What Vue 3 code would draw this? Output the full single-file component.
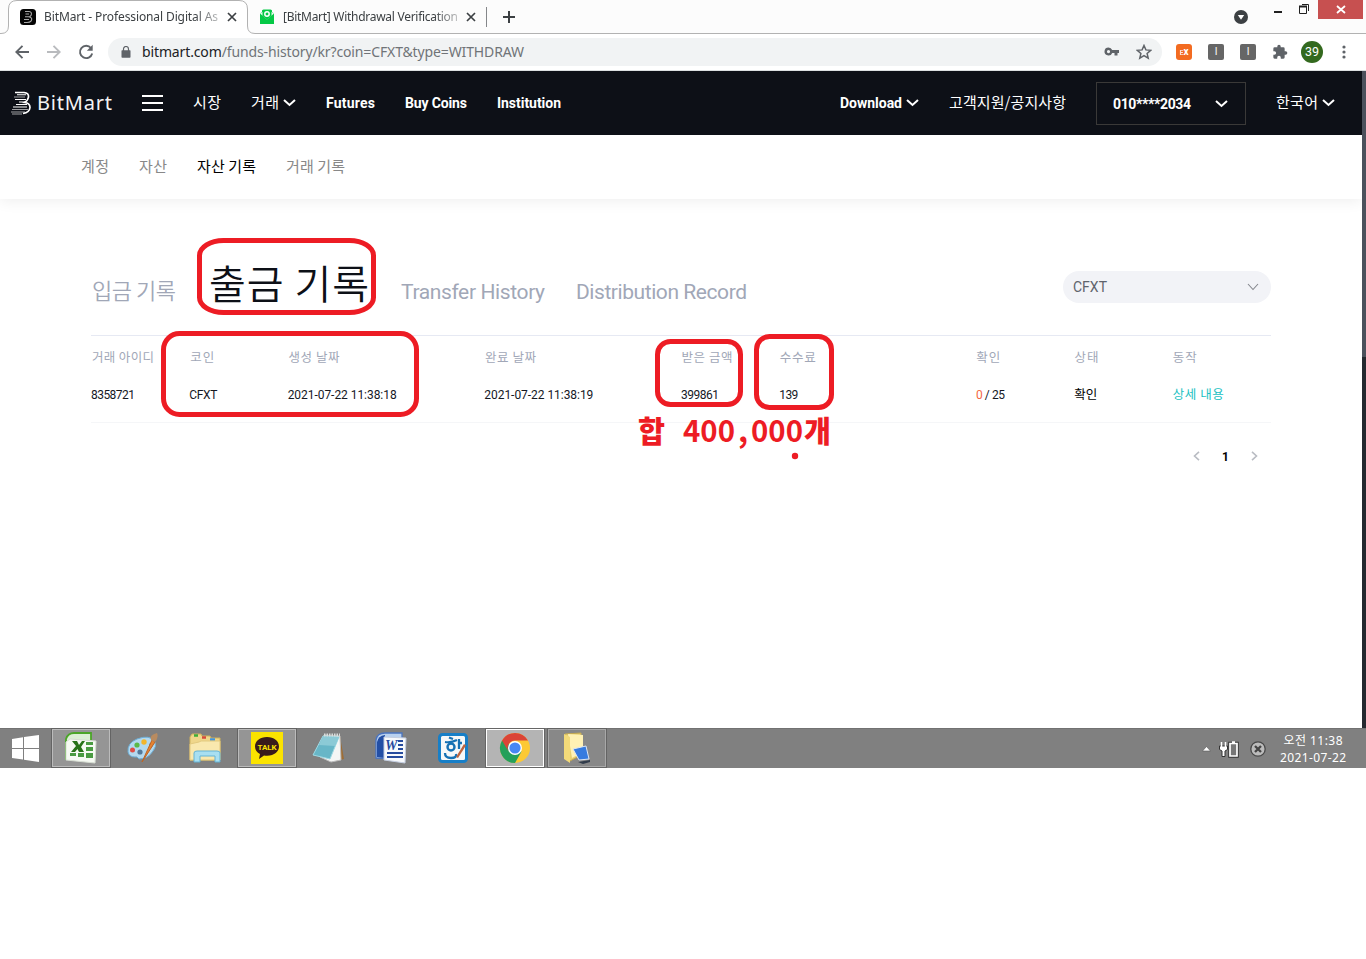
<script setup>
const columns = [
  { title: '거래 아이디', tw: 62, value: '8358721', vw: 44 },
  { title: '코인', tw: 24, value: 'CFXT', vw: 28 },
  { title: '생성 날짜', tw: 51, value: '2021-07-22 11:38:18', vw: 109 },
  { title: '완료 날짜', tw: 51, value: '2021-07-22 11:38:19', vw: 109 },
  { title: '받은 금액', tw: 51, value: '399861', vw: 38 },
  { title: '수수료', tw: 36, value: '139', vw: 19 },
  { title: '확인', tw: 24, value: '0 / 25', vw: 29, kind: 'count' },
  { title: '상태', tw: 24, value: '확인', vw: 23, kind: 'status' },
  { title: '동작', tw: 24, value: '상세 내용', vw: 51, kind: 'link' }
]

// Tracks a label out (or in) so that it fills the given width.
const vFit = {
  mounted(el, { value }) {
    const count = el.textContent.trim().length
    const natural = el.getBoundingClientRect().width
    if (count > 1) el.style.letterSpacing = `${(value - natural) / (count - 1)}px`
    el.style.width = `${value}px`
  }
}
</script>

<template>
  <div class="screen">
    <header class="tabs">
      <svg class="tab-outline" width="1366" height="34" viewBox="0 0 1366 34">
        <path d="M0 34V33.5H1Q8.500 33.500 8.500 26V9Q8.500 .5 17 .5H239Q247.500 .5 247.500 9V26Q247.500 33.500 255 33.500H1366V34Z" fill="#fff" />
        <path d="M0 33.500H1Q8.500 33.500 8.500 26V9Q8.500 .5 17 .5H239Q247.500 .5 247.500 9V26Q247.500 33.500 255 33.500H1366" fill="none" stroke="#b2b2b2" />
      </svg>
      <svg class="fav" width="16" height="16" viewBox="0 0 16 16">
        <rect width="16" height="16" rx="3.500" fill="#050505" />
        <path d="M5 2.500H9Q12.500 3 11 6.500L9.500 8Q13 9 11 12.200Q10 13.500 7 13.500H4M5.500 5H9M5 7.700H9.500M4 10.500H9" fill="none" stroke="#aaa" stroke-width="1.100" />
      </svg>
      <span class="tab-title first"><span v-fit="174">BitMart - Professional Digital As</span></span>
      <svg class="close" width="10" height="10" viewBox="0 0 10 10"><path d="M1 1L9 9M9 1L1 9" /></svg>
      <svg class="fav mail" width="16" height="16" viewBox="0 0 16 16">
        <path d="M1 4.500L3 3V2Q3 .5 4.500 .5H11.500Q13 .5 13 2V3L15 4.500V15H1Z" fill="#05c946" />
        <path d="M1 4.500L3.500 3H12.500L15 4.500L8 10.500Z" fill="#e9fbef" /><path d="M3.500 1H12.500V7L8 10.500L3.500 7Z" fill="#05c946" /><circle cx="8" cy="5" r="2.200" fill="none" stroke="#fff" stroke-width="1.500" />
      </svg>
      <span class="tab-title second"><span v-fit="175">[BitMart] Withdrawal Verification</span></span>
      <svg class="close" width="10" height="10" viewBox="0 0 10 10"><path d="M1 1L9 9M9 1L1 9" /></svg>
      <i class="divider"></i>
      <svg class="plus" width="12" height="12" viewBox="0 0 12 12"><path d="M6 0V12M0 6H12" stroke="#3c4043" stroke-width="2" /></svg>
      <div class="window-controls">
        <svg width="14" height="14" viewBox="0 0 14 14"><circle cx="7" cy="7" r="7" fill="#3c4043" /><path d="M3.800 5H10.200L7 9.800Z" fill="#fff" /></svg>
        <svg class="win" width="78" height="19" viewBox="0 0 78 19">
          <path d="M4 12H12" stroke="#202020" stroke-width="2" />
          <path d="M32 4.500H38.500V11M29.500 6.500H36.500V13.500H29.500Z" fill="none" stroke="#202020" />
          <path d="M29 6.500H37" stroke="#202020" stroke-width="2" />
        </svg>
        <b><svg width="45" height="19" viewBox="0 0 45 19"><path d="M19 6L27 13M27 6L19 13" stroke="#fff" stroke-width="1.800" /></svg></b>
      </div>
    </header>

    <div class="toolbar">
      <svg width="14" height="14" viewBox="0 0 14 14" class="ico back"><path d="M14 7H1.500M7.500 .8L1.300 7L7.500 13.200" /></svg>
      <svg width="14" height="14" viewBox="0 0 14 14" class="ico fwd"><path d="M0 7H12.500M6.500 .8L12.700 7L6.500 13.200" /></svg>
      <svg width="16" height="16" viewBox="0 0 16 16" class="ico reload"><path d="M13 4A6.200 6.200 0 1 0 14.200 9.500" /><path d="M14.700 .8V6.700H8.800Z" class="solid" /></svg>
      <div class="omnibox">
        <svg width="10" height="12" viewBox="0 0 10 12"><path d="M1 4.200H9Q9.500 4.200 9.500 5V11Q9.500 11.700 8.700 11.700H1.300Q.5 11.700 .5 11V5Q.5 4.200 1 4.200Z" fill="#5f6368" /><path d="M2.500 5V3A2.500 2.500 0 0 1 7.500 3V5" fill="none" stroke="#5f6368" stroke-width="1.200" /></svg>
        <span v-fit="382" class="url"><em>bitmart.com</em>/funds-history/kr?coin=CFXT&amp;type=WITHDRAW</span>
        <svg class="key" width="16" height="10" viewBox="0 0 16 10"><path d="M4.500 .5A4 4 0 1 0 8.200 6H10.500V8.500H13.500V6H15V3H8.200A4 4 0 0 0 4.500 .5ZM4.500 3A1.600 1.600 0 1 1 4.500 6.200A1.600 1.600 0 0 1 4.500 3Z" fill="#5f6368" fill-rule="evenodd" /></svg>
        <svg class="star" width="16" height="16" viewBox="0 0 16 16"><path d="M8 1.500L9.900 5.900L14.700 6.300L11.100 9.500L12.200 14.200L8 11.700L3.800 14.200L4.900 9.500L1.300 6.300L6.100 5.900Z" fill="none" stroke="#5f6368" stroke-width="1.500" /></svg>
      </div>
      <span class="ext orange"><small>E</small>x</span>
      <span class="ext grey">I</span>
      <span class="ext grey">I</span>
      <svg class="puzzle" width="16" height="16" viewBox="0 0 24 24"><path d="M20.500 11H19V7Q19 5 17 5H13V3.500A2.500 2.500 0 0 0 8 3.500V5H4Q2 5 2 7V10.800H3.500A2.700 2.700 0 0 1 3.500 16.200H2V20Q2 22 4 22H7.800V20.500A2.700 2.700 0 0 1 13.200 20.500V22H17Q19 22 19 20V16H20.500A2.500 2.500 0 0 0 20.500 11Z" fill="#5f6368" /></svg>
      <span class="avatar">39</span>
      <svg class="more" width="4" height="14" viewBox="0 0 4 14" fill="#5f6368"><circle cx="2" cy="2" r="1.600" /><circle cx="2" cy="7" r="1.600" /><circle cx="2" cy="12" r="1.600" /></svg>
    </div>

    <main class="page">
      <nav class="nav">
        <svg class="logo" width="21" height="24" viewBox="0 0 21 24" fill="none" stroke="#fff">
          <path d="M4 1.500H13Q18 2 17.500 6Q17 9.500 13.500 11.500Q19 12 19 16.500Q18.500 21.500 12 22.500" stroke-width="1.700" />
          <path d="M6 3.700H15M4 8.500H15M8 11H14M5 13.500H16M2 16H16" stroke-width="1.100" />
          <path d="M3 6H14M1 18.500H17M0 21H14M1 23H11" stroke-width="1.100" opacity=".6" />
        </svg>
        <span class="brand" v-fit="75">BitMart</span>
        <svg class="burger" width="21" height="16" viewBox="0 0 21 16"><path d="M0 1H21M0 8H21M0 15H21" stroke="#fff" stroke-width="2" /></svg>
        <span class="ko market" v-fit="28">시장</span>
        <span class="ko trade" v-fit="28">거래</span>
        <svg class="chev" width="13" height="8" viewBox="0 0 13 8"><path d="M1 1L6.500 6L12 1" /></svg>
        <span class="en futures" v-fit="49">Futures</span>
        <span class="en buy" v-fit="62">Buy Coins</span>
        <span class="en inst" v-fit="64">Institution</span>
        <span class="en download" v-fit="62">Download</span>
        <svg class="chev" width="13" height="8" viewBox="0 0 13 8"><path d="M1 1L6.500 6L12 1" /></svg>
        <span class="ko support" v-fit="117">고객지원/공지사항</span>
        <div class="account">
          <span class="en" v-fit="78">010****2034</span>
          <svg width="13" height="8" viewBox="0 0 13 8"><path d="M1 1L6.500 6L12 1" /></svg>
        </div>
        <span class="ko lang" v-fit="42">한국어</span>
        <svg class="chev" width="13" height="8" viewBox="0 0 13 8"><path d="M1 1L6.500 6L12 1" /></svg>
      </nav>

      <nav class="subnav">
        <span v-fit="28">계정</span>
        <span v-fit="28">자산</span>
        <span v-fit="59" class="on">자산 기록</span>
        <span v-fit="59">거래 기록</span>
      </nav>

      <section class="content">
        <div class="heads">
          <span class="deposit" v-fit="84">입금 기록</span>
          <span class="withdraw" v-fit="160">출금 기록</span>
          <span class="transfer" v-fit="144">Transfer History</span>
          <span class="dist" v-fit="171">Distribution Record</span>
          <div class="select">
            <span v-fit="34">CFXT</span>
            <svg width="12" height="8" viewBox="0 0 12 8"><path d="M1 1L6 6.500L11 1" fill="none" stroke="#85878d" stroke-width="1.100" /></svg>
          </div>
        </div>
        <div class="row titles">
          <div v-for="c in columns" :key="c.title"><span v-fit="c.tw">{{ c.title }}</span></div>
        </div>
        <div class="row values">
          <div v-for="c in columns" :key="c.title">
            <span v-if="c.kind === 'count'" v-fit="c.vw"><i>0</i> / 25</span>
            <span v-else v-fit="c.vw" :class="c.kind">{{ c.value }}</span>
          </div>
        </div>
        <div class="pager">
          <svg width="7" height="10" viewBox="0 0 7 10"><path d="M6 .8L1.500 5L6 9.200" /></svg>
          <b>1</b>
          <svg width="7" height="10" viewBox="0 0 7 10"><path d="M1 .8L5.500 5L1 9.200" /></svg>
        </div>
      </section>
      <aside class="scroll"><i></i></aside>
    </main>

    <footer class="taskbar">
      <svg class="start" width="27" height="27" viewBox="0 0 27 27" fill="#fff"><path d="M0 4L11 2.300V13H0ZM12 2.100L27 0V13H12ZM0 14H11V24.500L0 23ZM12 14H27V27L12 24.700Z" /></svg>
      <div class="app open">
        <svg width="34" height="32" viewBox="0 0 34 32">
          <path d="M2 28V7Q4 1 10 1H27V8" fill="#dcefd5" stroke="#4ba528" stroke-width="1.800" />
          <path d="M6 7L32 9L31 31L2 28V10Z" fill="#f6faf3" stroke="#d6ddd2" />
          <path d="M8 9H13L15 13L18 9H21L17 15L20 20H15L13.500 17L11 20H7L12 14Z" fill="#287318" />
          <path d="M22 10H29V13H22ZM22 15H29V19H22ZM6 21H12V24H6ZM14 21H20V25H14ZM22 21H29V26H22Z" fill="#4a9b42" />
        </svg>
      </div>
      <div class="app">
        <svg width="34" height="32" viewBox="0 0 34 32">
          <path d="M2 20Q1 11 11 7Q24 2 29 10Q31 14 27 19Q22 27 13 27Q11 24 9 25Q3 25 2 20Z" fill="#b3d9ef" stroke="#6dadd4" />
          <circle cx="14" cy="20" r="2.600" fill="#53799a" /><circle cx="6.500" cy="18" r="2.500" fill="#e04d46" /><circle cx="11" cy="13" r="2.600" fill="#5bb947" /><circle cx="18" cy="10" r="2.700" fill="#f2b52c" /><circle cx="25" cy="13" r="2" fill="#4289d4" />
          <path d="M16 30L26 8L29 10Z" fill="#e68331" stroke="#bd6425" /><path d="M25 8Q23 3 31 1Q33 5 29 10Z" fill="#b88b60" />
        </svg>
      </div>
      <div class="app">
        <svg width="34" height="32" viewBox="0 0 34 32">
          <path d="M2 28V5L4 2H13L14 4H22L23 6H32V28Z" fill="#efd68a" stroke="#ceb15c" />
          <path d="M6 3.500H10" stroke="#3dad39" stroke-width="2.500" /><path d="M14 5.500H18" stroke="#d54b3d" stroke-width="2.500" /><path d="M22 7.500H27" stroke="#4395dc" stroke-width="2.500" />
          <path d="M2 12L11 10L13 9H32V28H2Z" fill="#f9e8ae" stroke="#e2c97e" />
          <path d="M6 30V21Q6 19 9 19H29Q32 19 32 21V30H27V24H12V30Z" fill="#a8dff1" stroke="#64b4d5" />
        </svg>
      </div>
      <div class="app open">
        <svg width="32" height="32" viewBox="0 0 32 32"><path d="M0 0H32V32H0Z" fill="#fbe300" /><path d="M16 5C9 5 4 9 4 14.500C4 18 6 20.500 9 22L8 27L13 23.500C22 25 28 20 28 14.500C28 9 23 5 16 5Z" fill="#391b1b" /><text x="16" y="18" text-anchor="middle" class="talk" textLength="19">TALK</text></svg>
      </div>
      <div class="app">
        <svg width="34" height="32" viewBox="0 0 34 32"><path d="M28 4L32 27L24 29Z" fill="#9d6d36" /><path d="M12 3L28 4L29 28L19 30L8 25Z" fill="#f5f6f5" stroke="#bbb" /><path d="M11 4L27 5L18 27L1 23Z" fill="#68b6c7" stroke="#9fdae4" /><path d="M11 4L27 5L23 14L7 13Z" fill="#8ccad6" /><path d="M12 3H28" stroke="#d8dedd" stroke-width="3" stroke-dasharray="1.500 1" /></svg>
      </div>
      <div class="app">
        <svg width="34" height="32" viewBox="0 0 34 32"><path d="M2 26V8Q3 1 11 1H28V27Z" fill="#b9d1ef" stroke="#4a74c0" stroke-width="1.300" /><path d="M3 25V10Q4 4 11 3V26Z" fill="#234fa5" /><path d="M10 5L32 6L31 31L10 28Z" fill="#f7f9fc" stroke="#c3cde0" /><text x="11" y="18" class="word">W</text><path d="M24 9H29M24 13H29M24 17H29M13 21H29M13 25H29" stroke="#254a9e" stroke-width="2" /></svg>
      </div>
      <div class="app">
        <svg width="32" height="32" viewBox="0 0 32 32"><rect x="2.500" y="2.500" width="27" height="27" rx="3" fill="#f6f8f9" stroke="#177fc8" stroke-width="3" /><path d="M12 5.500L16 7M8 10Q14 11 20 8" fill="none" stroke="#1671b4" stroke-width="2.200" /><circle cx="14" cy="15" r="3.500" fill="none" stroke="#1671b4" stroke-width="2.400" /><path d="M22 7V17M22 11H25M8 21Q8 26 14 26Q20 26 19 22" fill="none" stroke="#1671b4" stroke-width="2.300" /><path d="M19 25L27 12L29 13.500L21 26Z" fill="#bd633e" /></svg>
      </div>
      <div class="app active">
        <svg width="32" height="32" viewBox="0 0 32 32"><circle cx="16" cy="16" r="15" fill="#fcc934" /><path d="M16 16L3 8.500A15 15 0 0 0 16 31L22.500 19.500Z" fill="#24a05a" /><path d="M16 1A15 15 0 0 1 29 8.500H16A7.500 7.500 0 0 0 9.500 19.500L3 8.500A15 15 0 0 1 16 1Z" fill="#db4437" /><circle cx="16" cy="16" r="7" fill="#fff" /><circle cx="16" cy="16" r="5.600" fill="#4787f3" /></svg>
      </div>
      <div class="app open folder">
        <svg width="32" height="32" viewBox="0 0 32 32"><path d="M4 2L20 1V23L9 29L4 25Z" fill="#e7d071" stroke="#c4a951" /><path d="M7 2L22 3V20L11 26Z" fill="#fff1b4" /><path d="M3 2L9 5V31L3 27Z" fill="#f3da79" /><path d="M12 17L25 14L28 27L18 28Z" fill="#367bdf" stroke="#dce6f4" /><path d="M17 30L29 28V30L22 32Z" fill="#313c4b" /></svg>
      </div>
      <svg class="tray" width="66" height="20" viewBox="0 0 66 20">
        <path d="M.5 12L4.500 7.500L8.500 12Z" fill="#fff" stroke="#555" stroke-width=".6" />
        <path d="M19.500 3V8M23.500 3V8M17.500 7H25.500V10.500L23 12V17.500H20V12L17.500 10.500Z" fill="#fff" stroke="#333" stroke-width="1" />
        <path d="M19.500 3V8M23.500 3V8" stroke="#fff" stroke-width="1.500" />
        <path d="M28 4.500H35V17H28Z" fill="#666" stroke="#333" stroke-width="3.500" /><path d="M28 4.500H35V17H28ZM30 3H33" fill="#777" stroke="#fff" stroke-width="1.700" />
        <circle cx="56" cy="10" r="7.200" fill="#bbb" stroke="#484848" stroke-width="1.300" /><path d="M53 7L59 13M59 7L53 13" stroke="#444" stroke-width="2.300" />
      </svg>
      <div class="clock"><span v-fit="59">오전 11:38</span><span v-fit="66">2021-07-22</span></div>
    </footer>

    <svg class="marks" width="1366" height="959" viewBox="0 0 1366 959">
      <g fill="none" stroke="#ed1c24" stroke-width="5">
        <rect x="199.500" y="240.500" width="174" height="72" rx="24" ry="15" />
        <rect x="163.500" y="333.500" width="253" height="81" rx="16" />
        <rect x="657.500" y="341.500" width="83" height="63" rx="13" />
        <rect x="756.500" y="336.500" width="75" height="71" rx="13" />
      </g>
      <g fill="#ed1c24">
        <text class="mark-ko" x="638" y="442" textLength="27" lengthAdjust="spacingAndGlyphs">합</text>
        <text class="mark-num" x="683" y="442" textLength="52" lengthAdjust="spacingAndGlyphs">400</text>
        <text class="mark-num" x="738" y="442">,</text>
        <text class="mark-num" x="751" y="442" textLength="52" lengthAdjust="spacingAndGlyphs">000</text>
        <text class="mark-ko" x="804" y="442" textLength="27" lengthAdjust="spacingAndGlyphs">개</text>
        <circle cx="795" cy="456" r="3.200" />
      </g>
    </svg>
  </div>
</template>

<style>
body { background: #fff; overflow: hidden; }
</style>

<style scoped>
.screen { position: relative; width: 1366px; height: 959px; overflow: hidden; background: #fff; font-family: Roboto, "Noto Sans CJK KR", sans-serif; }
.screen * { box-sizing: border-box; }
.screen svg { display: block; flex: none; }
.screen span { white-space: nowrap; flex: none; }
i, em { font-style: normal; }

.tabs { position: relative; height: 34px; background: #fcfcfc; display: flex; align-items: center; padding-left: 20px; }
.tab-outline { position: absolute; left: 0; top: 0; }
.tabs > :not(.tab-outline) { z-index: 1; }
.tab-title { font: 12px/16px "Noto Sans", sans-serif; color: #3c4043; height: 16px; -webkit-mask-image: linear-gradient(90deg, #000 86%, transparent 106%); mask-image: linear-gradient(90deg, #000 86%, transparent 106%); }
.tab-title span { display: inline-block; }
.first { width: 175px; margin: 0 8px; }
.second { width: 175px; margin: 0 8px; }
.close { stroke: #3c4043; stroke-width: 1.7; }
.mail { margin-left: 22px; }
.divider { width: 1px; height: 20px; background: #85878a; margin: 0 16px 0 10px; }
.window-controls { display: flex; margin-left: auto; align-self: flex-start; }
.window-controls > svg:first-child { margin: 10px 22px 0 0; }
.win { margin-right: -30px; }
.window-controls b { width: 45px; height: 19px; background: #c75050; margin-right: 3px; }

.toolbar { height: 37px; background: #fff; border-bottom: 1px solid #dce0e1; display: flex; align-items: center; padding-left: 15px; }
.ico { fill: none; stroke: #5f6368; stroke-width: 1.9; }
.fwd { stroke: #b9bbbe; margin-left: 18px; }
.reload { margin-left: 17px; }
.solid { fill: #5f6368; stroke: none; }
.omnibox { width: 1054px; height: 28px; margin-left: 14px; border-radius: 14px; background: #f1f3f4; display: flex; align-items: center; padding-left: 13px; }
.url { display: inline-block; margin-left: 11px; font: 14px/20px "Noto Sans", sans-serif; color: #707478; }
.url em { color: #202124; }
.key { margin-left: 580px; }
.star { margin-left: 16px; }
.ext { width: 16px; height: 16px; border-radius: 2px; color: #fff; font: bold 10px/16px Roboto, sans-serif; text-align: center; }
.ext small { font-size: 7px; opacity: .8; }
.orange { background: #f36b21; margin-left: 14px; border-radius: 3px; }
.grey { background: #666; margin-left: 16px; font-weight: 400; }
.puzzle { margin-left: 16px; }
.avatar { width: 22px; height: 22px; border-radius: 50%; background: #33691e; color: #fff; font-size: 12.5px; line-height: 22px; text-align: center; margin-left: 13px; }
.more { margin-left: 19px; }

.page { position: relative; height: 657px; }
.nav { height: 64px; width: 1362px; background: #0d1017; color: #fff; display: flex; align-items: center; padding-left: 11px; }
.nav span { display: inline-block; }
.brand { margin-left: 5px; font: 20px/28px "Noto Sans", sans-serif; color: #f4f4f4; }
.burger { margin-left: 30px; }
.ko { font: 400 15px/22px "Noto Sans CJK KR", sans-serif; padding-bottom: 2px; height: 24px; }
.en { font: bold 14px/20px Roboto, sans-serif; }
.market { margin-left: 30px; }
.trade { margin-left: 30px; }
.chev { margin-left: 4px; }
.nav path { fill: none; }
.chev path, .account path { stroke: #fff; stroke-width: 2; }
.futures { margin-left: 30px; }
.buy, .inst { margin-left: 30px; }
.download { margin-left: 279px; }
.support { margin-left: 30px; }
.account { width: 150px; height: 43px; border: 1px solid #3a3938; margin-left: 30px; display: flex; align-items: center; padding: 1px 0 0 16px; }
.account svg { margin-left: 24px; }
.lang { margin-left: 30px; }

.subnav { height: 64px; width: 1362px; background: #fff; display: flex; align-items: center; gap: 30px; padding: 0 0 3px 81px; box-shadow: 0 2px 14px rgba(0, 0, 0, .07); font: 15px/22px "Noto Sans CJK KR", sans-serif; color: #888; clip-path: inset(0 0 -20px 0); }
.subnav span { display: inline-block; }
.subnav .on { color: #000; }

.content { width: 1180px; margin-left: 91px; }
.heads { height: 137px; border-bottom: 1px solid #e6e9f3; display: flex; align-items: flex-start; color: #a1a7b7; font: 21px/30px Roboto, sans-serif; }
.heads > span { display: inline-block; }
.deposit { font: 350 22px/32px "Noto Sans CJK KR", sans-serif; margin: 74px 0 0 1px; }
.withdraw { font: 350 40px/58px "Noto Sans CJK KR", sans-serif; color: #0d1017; margin: 54px 0 0 33px; }
.transfer { margin: 78px 0 0 32px; }
.dist { margin: 78px 0 0 31px; }
.select { width: 208px; height: 32px; border-radius: 16px; background: #f2f3f7; margin: 72px 0 0 auto; display: flex; align-items: center; justify-content: space-between; padding: 0 12px 0 10px; color: #5f636c; font-size: 14px; }
.select span { display: inline-block; line-height: 30px; padding-bottom: 1px; }
.row { display: grid; grid-template-columns: 1fr 1fr 2fr 2fr 1fr 2fr 1fr 1fr 1fr; align-items: center; }
.row > div { min-width: 0; display: flex; }
.row span { display: inline-block; }
.titles { height: 42px; font: 12.5px/18px "Noto Sans CJK KR", sans-serif; color: #a1a7b7; padding-left: 1px; }
.values { height: 45px; border-bottom: 1px solid #f5f6f8; font: 12px/18px Roboto, "Noto Sans CJK KR", sans-serif; color: #15181f; padding-bottom: 11px; }
.values i { color: #f4683f; }
.values .link { color: #18bfc2; }
.values .link, .values .status { font-size: 12.5px; }
.values .status { color: #000; }
.pager { display: flex; justify-content: flex-end; align-items: center; height: 65px; padding-right: 13px; }
.pager path { fill: none; stroke: #b9bcc3; stroke-width: 1.6; }
.pager b { font-size: 12px; width: 7px; margin: 2px 22px 0 22px; }
.scroll { position: absolute; right: 0; top: 0; width: 4px; height: 657px; background: #24292f; }
.scroll i { display: block; height: 286px; background: #4b515c; }

.taskbar { height: 40px; background: #808080; border-top: 1px solid #727272; display: flex; align-items: center; padding-left: 11.5px; color: #fff; }
.start { margin: -1px 12.500px 0 0; }
.app { width: 60px; height: 40px; margin-right: 2px; display: flex; align-items: center; justify-content: center; border: 1px solid transparent; margin-top: -1px; }
.open { background: #959595; border-color: #646464; box-shadow: inset 0 0 0 1px #bbb; }
.folder { background: #888; box-shadow: inset 0 0 0 1px #a8a8a8; }
.active { background: #b4b4b4; border-color: #666; box-shadow: inset 0 0 0 1px #fff; }
.talk { font: bold 8px Roboto, sans-serif; fill: #fbe300; }
.word { font: italic bold 14px "Liberation Serif", serif; fill: #254a9e; }
.tray { margin-left: 593px; }
.clock { width: 66px; margin-left: 12px; display: flex; flex-direction: column; align-items: center; font: 12px/17px "Noto Sans", "Noto Sans CJK KR", sans-serif; }
.clock span { display: inline-block; }

.marks { position: absolute; left: 0; top: 0; pointer-events: none; }
.mark-ko { font: 900 30px "Noto Sans CJK KR", sans-serif; }
.mark-num { font: bold 31px "Noto Sans CJK KR", sans-serif; }
</style>
